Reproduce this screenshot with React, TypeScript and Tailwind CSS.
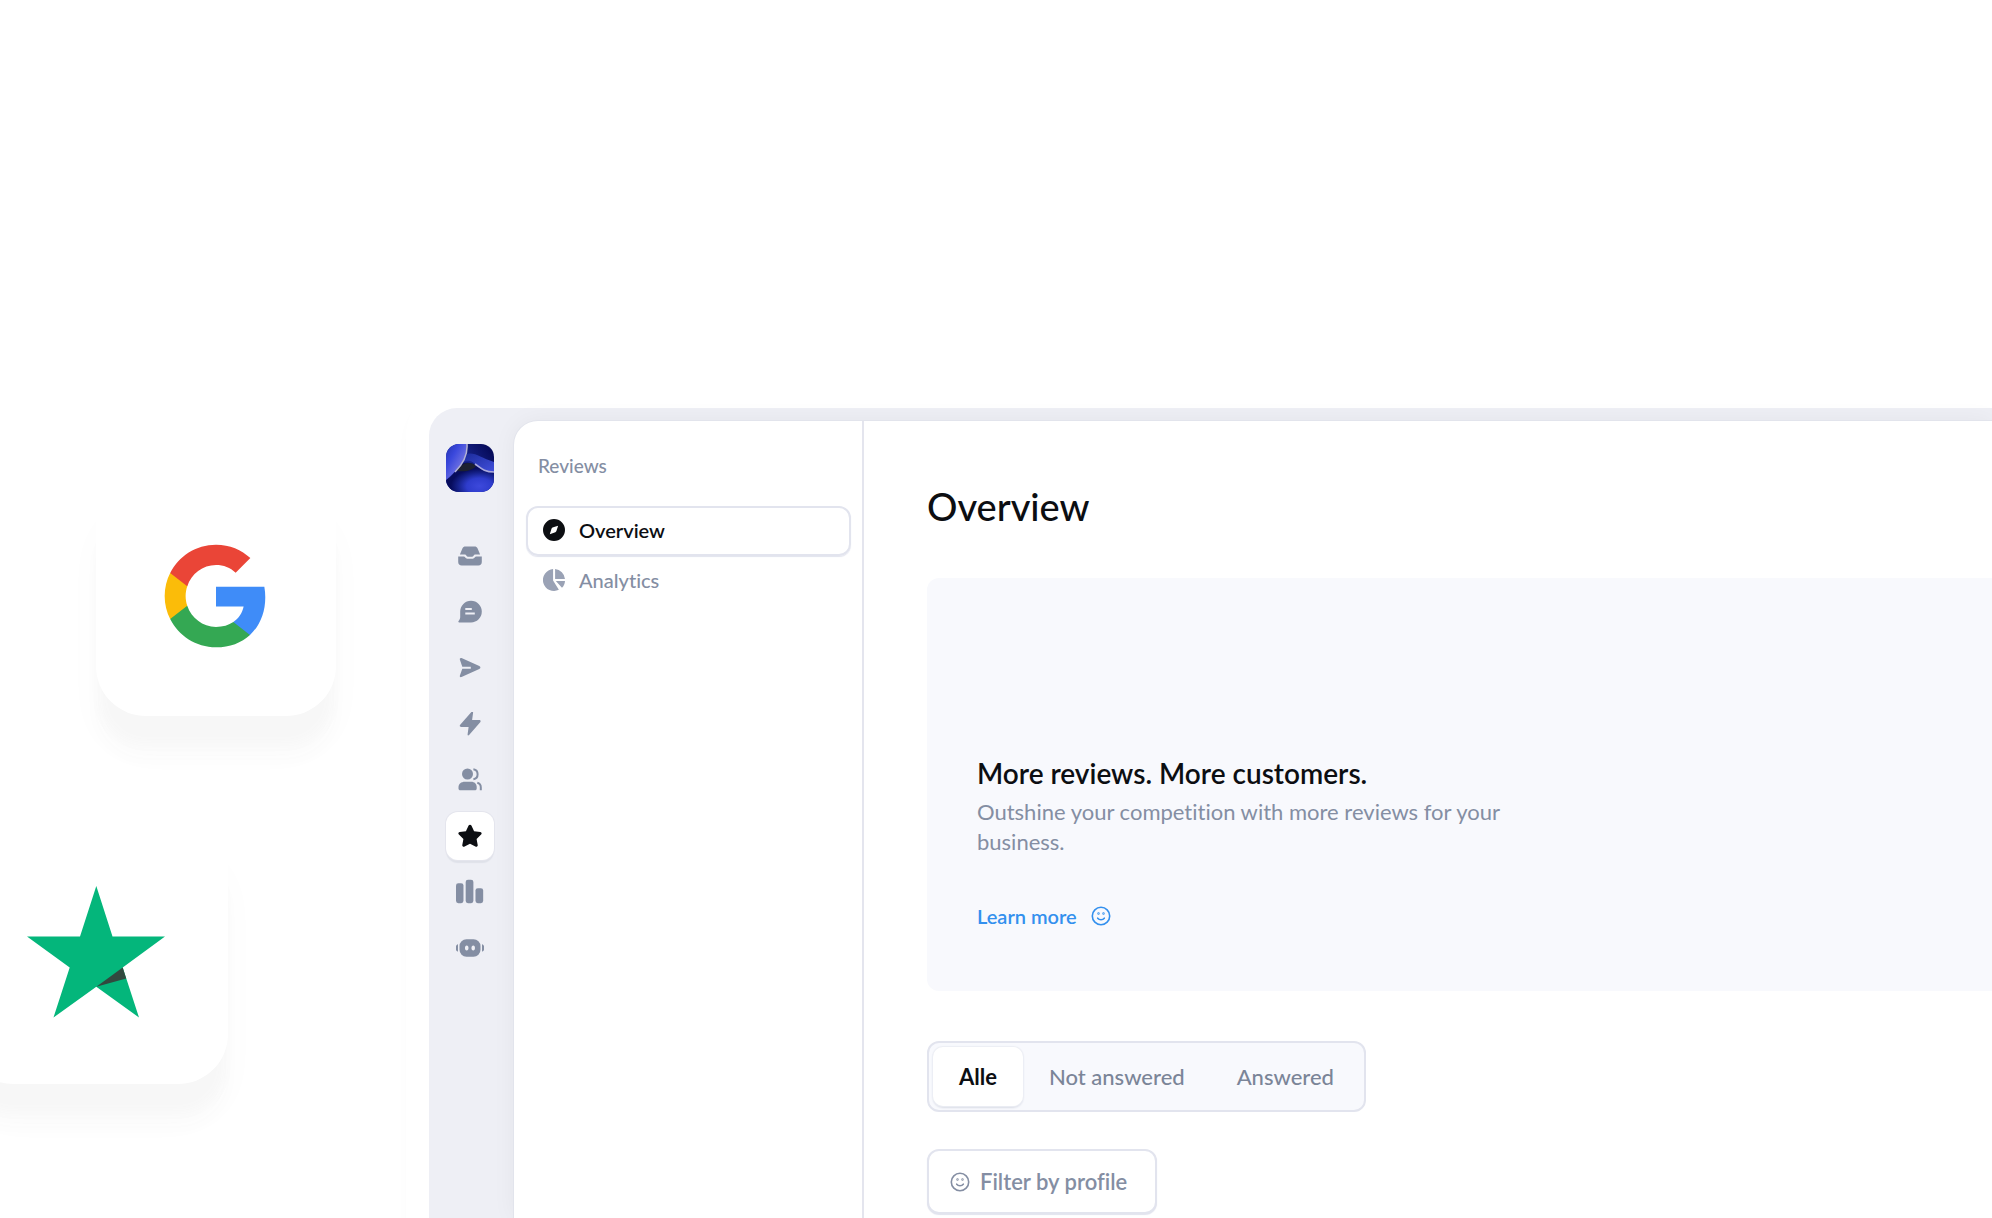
import type { ReactNode } from "react"
import clsx from "clsx"

function GoogleLogo() {
  return (
    <svg viewBox="0 0 24 24" className="size-28" role="img" aria-label="Google">
      <path fill="#3f8cf8" d="M22.56 12.25c0-.78-.07-1.53-.2-2.25H12v4.26h5.92c-.26 1.37-1.04 2.53-2.21 3.31v2.77h3.57c2.08-1.92 3.28-4.74 3.28-8.09z" />
      <path fill="#34a853" d="M12 23c2.97 0 5.46-.98 7.28-2.66l-3.57-2.77c-.98.66-2.23 1.06-3.71 1.06-2.86 0-5.29-1.93-6.16-4.53H2.18v2.84C3.99 20.53 7.7 23 12 23z" />
      <path fill="#fbbc09" d="M5.84 14.09c-.22-.66-.35-1.36-.35-2.09s.13-1.43.35-2.09V7.07H2.18C1.43 8.55 1 10.22 1 12s.43 3.45 1.18 4.93l3.66-2.84z" />
      <path fill="#ea4537" d="M12 5.38c1.62 0 3.06.56 4.21 1.64l3.15-3.15C17.45 2.09 14.97 1 12 1 7.7 1 3.99 3.47 2.18 7.07l3.66 2.84c.87-2.6 3.3-4.53 6.16-4.53z" />
    </svg>
  )
}

function TrustpilotLogo() {
  return (
    <svg viewBox="0 0 138 132" className="w-[138px]" role="img" aria-label="Trustpilot">
      <path fill="#04b67b" d="M138 50.500H85.500L69.300 0 53 50.500H0l42.700 31L26.500 131.500l42.800-30.800L112 131.500 95.700 81.500z" />
      <path fill="#32493f" d="M99.200 92.500 95.700 81.500 69.300 100.700z" />
    </svg>
  )
}

function WorkspaceLogo() {
  return (
    <svg viewBox="0 0 48 48" className="size-12 rounded-[13px]" aria-hidden="true">
      <defs>
        <linearGradient id="wave" x1="0" y1=".6" x2=".8" y2="0">
          <stop offset="0" stopColor="#1c2a9c" />
          <stop offset=".5" stopColor="#17248c" />
          <stop offset="1" stopColor="#070c5c" />
        </linearGradient>
        <linearGradient id="crest" x1="0" y1="0" x2="1" y2="1">
          <stop offset="0" stopColor="#1a2a9a" />
          <stop offset="1" stopColor="#4250dc" />
        </linearGradient>
        <radialGradient id="glow" cx=".7" cy=".8" r=".6">
          <stop offset="0" stopColor="#3d49dc" />
          <stop offset=".45" stopColor="#2e3ccc" />
          <stop offset=".75" stopColor="#16228c" />
          <stop offset="1" stopColor="#070c5c" />
        </radialGradient>
        <linearGradient id="fold" x1="0" y1="0" x2=".8" y2=".8">
          <stop offset="0" stopColor="#2433b0" />
          <stop offset=".4" stopColor="#3a48dc" />
          <stop offset="1" stopColor="#8381e4" />
        </linearGradient>
      </defs>
      <rect width="48" height="48" fill="url(#wave)" />
      <path d="M21 10c8-2 14 4 27 8v10c-8 1-14-3-19-8-4-4-8-4-12-2z" fill="url(#crest)" />
      <path d="M0 36c5-3 9-8 12-13 5-6 12-5 17-2 5 4 10 8 19 7v20H0z" fill="url(#glow)" />
      <path d="M11 27c3-5 6-8 11-8 4 0 6 1 8 3-3 4-9 6-19 5z" fill="#1d2130" />
      <path d="M29 20c5 3 8 8 19 8" fill="none" stroke="#a9a8dc" strokeWidth="1.600" />
      <path d="M0 0h21c1 14-7 24-21 36z" fill="url(#fold)" />
      <path d="M21 0c1 12-5 21-12 28" fill="none" stroke="#b4b3d4" strokeWidth="1.500" />
    </svg>
  )
}

function Icon({ children, className = "size-6" }: { children: ReactNode; className?: string }) {
  return (
    <svg viewBox="0 0 24 24" fill="currentColor" className={className} aria-hidden="true">
      {children}
    </svg>
  )
}

function SmileIcon() {
  return (
    <svg viewBox="0 0 20 20" fill="none" stroke="currentColor" strokeWidth="1.600" strokeLinecap="round" className="size-5" aria-hidden="true">
      <circle cx="10" cy="10" r="8.700" />
      <path d="M6.700 12.200c1.600 2 5 2 6.600 0" />
      <circle cx="7.500" cy="7.500" r=".4" />
      <circle cx="12.500" cy="7.500" r=".4" />
    </svg>
  )
}

const railItems = [
  {
    label: "Inbox",
    icon: <path d="M7.500 2.500h9c1.500 0 2.400.6 3 1.800l2.600 6.200h-5c-1.400 0-1.700 2.300-3.100 2.300h-4c-1.400 0-1.700-2.300-3.100-2.300h-5l2.600-6.200c.6-1.200 1.500-1.800 3-1.800zM.2 12.500h5.600c1.300 0 1.600 2.200 3.400 2.200h5.600c1.800 0 2.100-2.200 3.400-2.200h5.600v5.500c0 2.200-1.300 3.500-3.500 3.500H3.700C1.500 21.500.2 20.200.2 18z" />,
  },
  {
    label: "Chats",
    icon: <path fillRule="evenodd" d="M13 .8A10.800 10.800 0 0 1 13 22.400H1.300c-1 0-1.200-.9-.7-1.500 1.100-1.400 1.600-2.400 1.600-4v-5.300A10.800 10.800 0 0 1 13 .8zM7.300 8.100v2h6.500v-2zM7.300 12.400v2h9.500v-2z" />,
  },
  {
    label: "Campaigns",
    icon: <path d="M3.500 2.100 21.300 10.100c1.500.7 1.500 2.300 0 3L3.500 21c-1.200.5-2-.4-1.600-1.500L4.300 12.700h8.500v-2H4.300L1.900 3.700c-.4-1.200.5-2.100 1.600-1.600z" />,
  },
  {
    label: "Automations",
    icon: <path d="M13.400.1c.7-.8 1.800-.4 1.700.6l-1 7.400h7.100c1.400 0 1.800 1.200 1 2.100L11.100 22.900c-.8.900-1.700.5-1.500-.7l1-7.300H3.200c-1.400 0-1.900-1.200-1-2.100z" />,
  },
  {
    label: "Contacts",
    icon: (
      <>
        <circle cx="9.500" cy="6" r="5.500" />
        <path d="M7 13.700h6.200c3.300 0 5.500 2.200 5.500 5.300v1.400c0 1.100-.7 1.900-1.900 1.900H2.400c-1.200 0-1.900-.8-1.900-1.900V19c0-3.100 2.500-5.300 6.500-5.300z" />
        <path d="M15.400 1.200c5.600.8 5.600 9.200 0 10M19.300 14.700c2.300.6 3.500 2.200 3.500 4.500v3" fill="none" stroke="currentColor" strokeWidth="2" />
      </>
    ),
  },
  {
    label: "Reviews",
    icon: <path d="M10.600 1.600c.6-1.200 2.200-1.200 2.800 0l2.700 5.600 6.200.8c1.300.2 1.800 1.700.8 2.600l-4.500 4.300 1.100 6.100c.2 1.400-1.100 2.300-2.300 1.600L12 19.700l-5.400 2.900c-1.200.7-2.500-.2-2.300-1.600l1.100-6.100L.9 10.600C-.1 9.700.4 8.200 1.700 8l6.200-.8z" />,
  },
  {
    label: "Statistics",
    size: "size-7",
    icon: (
      <>
        <rect x="0" y="4.400" width="6.400" height="17.200" rx="2" />
        <rect x="8.300" y="1.400" width="6.600" height="20.200" rx="2" />
        <rect x="16.700" y="8.800" width="6.600" height="12.800" rx="2" />
      </>
    ),
  },
  {
    label: "Chatbot",
    size: "size-7",
    icon: (
      <>
        <path fillRule="evenodd" d="M9 4.500h6a6 6 0 0 1 6 6v3a6 6 0 0 1-6 6H9a6 6 0 0 1-6-6v-3a6 6 0 0 1 6-6zM9.200 9.900c-2 0-2 4.300 0 4.300s2-4.300 0-4.300zm5.600 0c-2 0-2 4.300 0 4.300s2-4.300 0-4.300z" />
        <path d="M1.700 8.800v6.400C.2 14.800-.2 13.600-.2 12s.4-2.800 1.900-3.200zM22.300 8.800v6.400c1.500-.4 1.900-1.600 1.900-3.200s-.4-2.800-1.900-3.200z" />
      </>
    ),
  },
]

const filters = ["Alle", "Not answered", "Answered"]

function IntegrationCard({ children, className }: { children: ReactNode; className: string }) {
  return (
    <div
      className={clsx(
        "flex shrink-0 items-center justify-center rounded-[50px] bg-white shadow-[0_32px_12px_-4px_#f7f7f7,0_42px_16px_0_#fbfbfb,0_36px_40px_4px_rgba(0,0,0,0.015)]",
        className,
      )}
    >
      {children}
    </div>
  )
}

function Rail() {
  return (
    <aside className="flex w-[85px] shrink-0 flex-col items-center pt-9 pr-1">
      <WorkspaceLogo />
      <nav className="mt-10 flex flex-col gap-2" aria-label="Main">
        {railItems.map((item) => (
          <button
            key={item.label}
            type="button"
            aria-label={item.label}
            className={clsx(
              "flex size-12 items-center justify-center rounded-xl",
              item.label === "Reviews"
                ? "bg-white text-[#0c0e12] shadow-[0_0_0_1px_#e4e5ed,0_3px_1px_#dfe1e9]"
                : "text-[#848ea3]",
            )}
          >
            <Icon className={item.size}>{item.icon}</Icon>
          </button>
        ))}
      </nav>
    </aside>
  )
}

function SubNav() {
  return (
    <aside className="w-[350px] shrink-0 border-r-2 border-[#e4e5ee] pt-[31px] pr-[11px] pl-3">
      <h2 className="px-3 text-[19px] leading-7 font-medium text-[#848ea3]">Reviews</h2>
      <nav className="mt-[26px] flex flex-col text-xl font-medium" aria-label="Reviews">
        <a
          href="#overview"
          aria-current="page"
          className="flex h-[50px] items-center gap-3.5 rounded-xl border-2 border-[#e2e4ee] px-[15px] pb-0.5 font-semibold text-[#0c0e12] shadow-[0_1px_1px_#e2e4ee]"
        >
          <Icon className="size-[22px]">
            <path fillRule="evenodd" d="M12 0a12 12 0 1 1 0 24 12 12 0 0 1 0-24zm4.500 7.300-5.300 1.800c-1.300.4-1.700.8-2.100 2.100L7.400 16.500l5.300-1.800c1.300-.4 1.700-.8 2.100-2.100z" />
          </Icon>
          Overview
        </a>
        <a href="#analytics" className="flex h-[50px] items-center gap-3.5 px-[17px] pb-0.5 text-[#848ea3]">
          <Icon className="size-[22px] text-[#9aa2b5]">
            <path d="M11 0v12.500l6.300 10.200A12 12 0 1 1 11 0zM13.200 0A12 12 0 0 1 24 10.800H13.200zM14 13h10c-.2 3-1.300 5.500-3.300 7.500z" />
          </Icon>
          Analytics
        </a>
      </nav>
    </aside>
  )
}

function Overview() {
  return (
    <main className="min-w-0 flex-1 pt-[61px] pl-[63px]">
      <h1 className="text-[38px] leading-[48px] font-medium text-[#0c0e12]">Overview</h1>

      <section className="mt-12 rounded-l-xl bg-[#f8f9fd] px-[50px] pt-[177px] pb-[61px]">
        <h2 className="text-[28px] leading-9 font-semibold text-[#0c0e12]">More reviews. More customers.</h2>
        <p className="mt-1.5 max-w-[560px] text-[22px] leading-[30px] text-[#848ea3]">
          Outshine your competition with more reviews for your business.
        </p>
        <a href="#learn-more" className="mt-[45px] inline-flex items-center gap-3.5 text-xl leading-7 font-semibold text-[#3390ee]">
          Learn more
          <SmileIcon />
        </a>
      </section>

      <div className="mt-[50px] flex w-fit rounded-xl border-2 border-[#e2e4ee] bg-[#f8f9fd] p-1">
        {filters.map((label) => (
          <button
            key={label}
            type="button"
            aria-pressed={label === "Alle"}
            className={clsx(
              "h-[59px] rounded-[10px] px-[26px] text-[22px]",
              label === "Alle"
                ? "bg-white font-bold text-[#0c0e12] shadow-[0_0_1px_1px_#eceef4,0_2px_2px_#d8dbe6]"
                : "font-medium text-[#7b8598]",
            )}
          >
            {label}
          </button>
        ))}
      </div>

      <button
        type="button"
        className="mt-[37px] flex h-[65px] items-center gap-2.5 rounded-xl border-2 border-[#e2e4ee] bg-white pr-7 pl-[21px] text-[22px] font-semibold text-[#848ea3] shadow-[0_1px_1px_#e2e4ee]"
      >
        <SmileIcon />
        Filter by profile
      </button>
    </main>
  )
}

export default function App() {
  return (
    <div
      className="flex h-screen overflow-hidden bg-white [font-variant-ligatures:none]"
      style={{ fontFamily: 'Lato, "Liberation Sans", sans-serif' }}
    >
      <div className="flex w-[429px] shrink-0 flex-col pt-[476px]">
        <IntegrationCard className="ml-24 size-[240px]">
          <GoogleLogo />
        </IntegrationCard>
        <IntegrationCard className="mt-[103px] -ml-[37px] size-[265px]">
          <TrustpilotLogo />
        </IntegrationCard>
      </div>

      <div className="mt-[408px] flex min-w-0 flex-1 rounded-tl-[28px] bg-[#eeeff5] shadow-[0_0_0_23px_#ffffff,0_8px_12px_24px_rgba(0,0,0,0.015)]">
        <Rail />
        <div className="mt-[13px] flex min-w-0 flex-1 rounded-tl-3xl bg-white shadow-[0_0_0_1px_#e2e4ec,0_0_24px_rgba(20,20,40,0.05)]">
          <SubNav />
          <Overview />
        </div>
      </div>
    </div>
  )
}
